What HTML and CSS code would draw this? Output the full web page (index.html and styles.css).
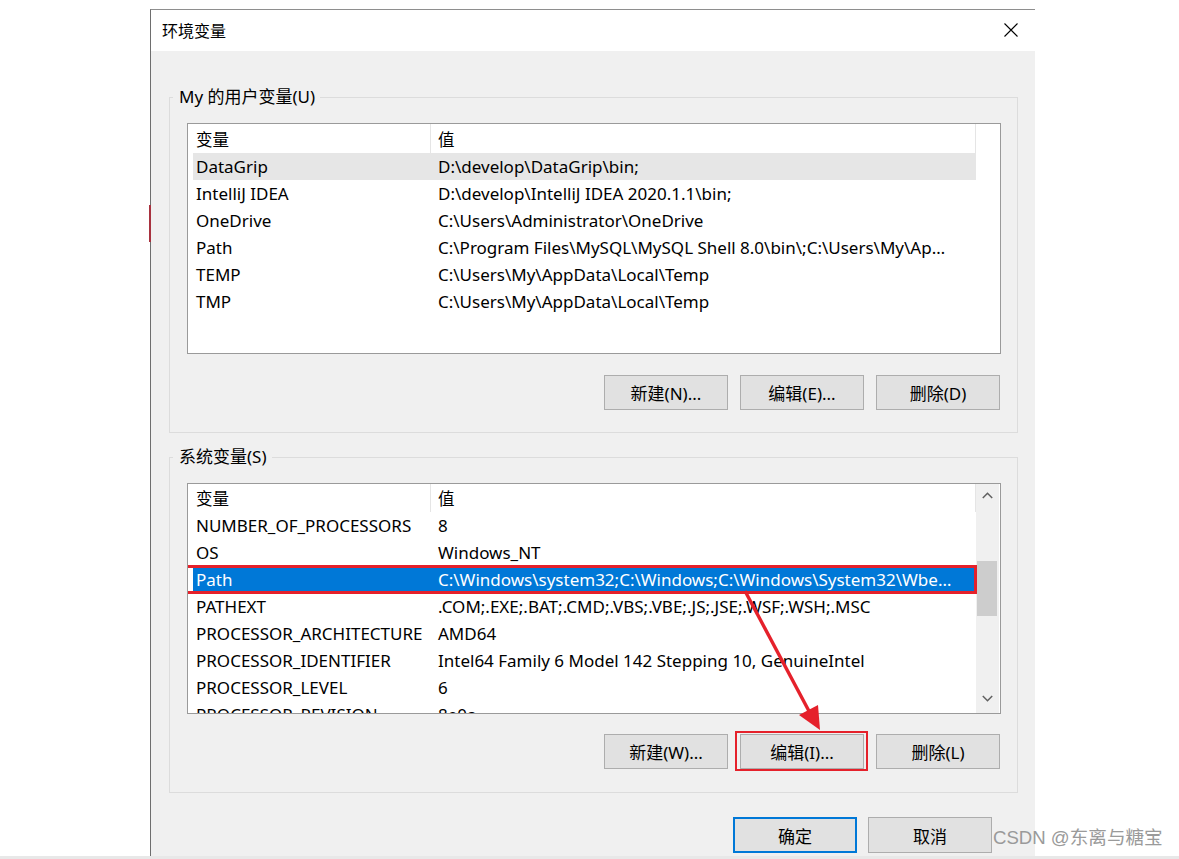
FILE: index.html
```html
<!DOCTYPE html>
<html lang="zh-CN">
<head>
<meta charset="utf-8">
<title>环境变量</title>
<link rel="stylesheet" href="styles.css">
</head>
<body>
<div class="page">
  <div class="dialog">
    <div class="titlebar">
      <span class="title">环境变量</span>
      <svg class="close" width="14" height="14" viewBox="0 0 14 14"><path d="M0.5 0.5 L13.5 13.5 M13.5 0.5 L0.5 13.5" stroke="#000" stroke-width="1.1" fill="none"/></svg>
    </div>
    <div class="dbody">
      <fieldset class="group">
        <legend>My 的用户变量(U)</legend>
        <div class="list list-user">
          <div class="list-main">
            <div class="lhead"><div class="hname">变量</div><div class="hval">值</div></div>
            <div class="row sel-gray"><div class="cname">DataGrip</div><div class="cval">D:\develop\DataGrip\bin;</div></div>
            <div class="row"><div class="cname">IntelliJ IDEA</div><div class="cval">D:\develop\IntelliJ IDEA 2020.1.1\bin;</div></div>
            <div class="row"><div class="cname">OneDrive</div><div class="cval">C:\Users\Administrator\OneDrive</div></div>
            <div class="row"><div class="cname">Path</div><div class="cval">C:\Program Files\MySQL\MySQL Shell 8.0\bin\;C:\Users\My\AppData\Local\Microsoft\WindowsApps;</div></div>
            <div class="row"><div class="cname">TEMP</div><div class="cval">C:\Users\My\AppData\Local\Temp</div></div>
            <div class="row"><div class="cname">TMP</div><div class="cval">C:\Users\My\AppData\Local\Temp</div></div>
          </div>
        </div>
        <div class="btnrow">
          <button class="btn">新建(N)...</button>
          <button class="btn">编辑(E)...</button>
          <button class="btn">删除(D)</button>
        </div>
      </fieldset>

      <fieldset class="group group-sys">
        <legend>系统变量(S)</legend>
        <div class="list">
          <div class="list-main">
            <div class="lhead"><div class="hname">变量</div><div class="hval">值</div></div>
            <div class="row"><div class="cname">NUMBER_OF_PROCESSORS</div><div class="cval">8</div></div>
            <div class="row"><div class="cname">OS</div><div class="cval">Windows_NT</div></div>
            <div class="row sel-blue"><div class="cname">Path</div><div class="cval">C:\Windows\system32;C:\Windows;C:\Windows\System32\Wbem;C:\Windows\System32\WindowsPowerShell\v1.0\;</div><div class="mark-row"></div></div>
            <div class="row"><div class="cname">PATHEXT</div><div class="cval">.COM;.EXE;.BAT;.CMD;.VBS;.VBE;.JS;.JSE;.WSF;.WSH;.MSC</div></div>
            <div class="row"><div class="cname">PROCESSOR_ARCHITECTURE</div><div class="cval">AMD64</div></div>
            <div class="row"><div class="cname">PROCESSOR_IDENTIFIER</div><div class="cval">Intel64 Family 6 Model 142 Stepping 10, GenuineIntel</div></div>
            <div class="row"><div class="cname">PROCESSOR_LEVEL</div><div class="cval">6</div></div>
            <div class="row"><div class="cname">PROCESSOR_REVISION</div><div class="cval">8e0a</div></div>
          </div>
          <div class="scrollbar">
            <div class="sbtn"><svg width="11" height="7" viewBox="0 0 11 7"><path d="M0.8 6 L5.5 1.2 L10.2 6" stroke="#606060" stroke-width="1.5" fill="none"/></svg></div>
            <div class="track"><div class="thumb"></div></div>
            <div class="sbtn sbtn-down"><svg width="11" height="7" viewBox="0 0 11 7"><path d="M0.8 1 L5.5 5.8 L10.2 1" stroke="#606060" stroke-width="1.5" fill="none"/></svg></div>
          </div>
        </div>
        <div class="btnrow">
          <button class="btn">新建(W)...</button>
          <button class="btn btn-marked">编辑(I)...<span class="mark-btn"></span></button>
          <button class="btn">删除(L)</button>
        </div>
      </fieldset>

      <div class="actions">
        <button class="btn btn-default">确定</button>
        <button class="btn">取消</button>
      </div>
    </div>
  </div>
</div>
<div class="strip"></div>

<div class="edge-mark"></div>
<svg class="arrow" width="1179" height="859" viewBox="0 0 1179 859">
  <line x1="745" y1="591" x2="810" y2="713" stroke="#e5212b" stroke-width="3.4"/>
  <polygon points="820,730 799,715 818,705" fill="#e5212b"/>
</svg>
<div class="watermark">CSDN @东离与糖宝</div>
</body>
</html>
```

FILE: styles.css
```css
* { box-sizing: border-box; }

body {
  margin: 0;
  width: 1179px;
  height: 859px;
  overflow: hidden;
  position: relative;
  background: #ffffff;
  font-family: "Noto Sans", "Noto Sans CJK SC", sans-serif;
  color: #000;
}

.page {
  padding: 9px 0 0 150px;
}

.dialog {
  width: 885px;
  border-top: 1px solid #8e8e8e;
  border-left: 1px solid #6e6e6e;
}

.titlebar {
  height: 41px;
  background: #ffffff;
  display: flex;
  align-items: center;
  justify-content: space-between;
  padding: 0 17px 0 11px;
}

.title {
  font-family: "Noto Sans CJK SC", sans-serif;
  font-size: 16px;
  line-height: 20px;
  margin-top: -2px;
}

.close { display: block; margin-top: -1px; }

.dbody {
  height: 805px;
  background: #f0f0f0;
  padding: 35px 17px 0 18px;
}

.group {
  margin: 0;
  min-width: 0;
  border: 1px solid #dcdcdc;
  padding: 0 16px 22px 17px;
}

.group-sys {
  margin-top: 13px;
  padding-bottom: 23px;
}

.group legend {
  margin-left: -14px;
  padding: 0 5px 0 6px;
  font-size: 17px;
  line-height: 22px;
}

.list {
  margin-top: 15px;
  height: 231px;
  border: 1px solid #9a9a9a;
  background: #ffffff;
  display: flex;
  overflow: hidden;
}

.list-main {
  width: 788px;
  flex: none;
}

.lhead {
  height: 28px;
  display: flex;
  font-size: 17px;
}

.list-user .lhead { height: 29px; }

.hname, .hval {
  display: flex;
  align-items: center;
  border-right: 1px solid #e5e5e5;
  font-family: "Noto Sans CJK SC", sans-serif;
  font-size: 16.5px;
}

.hname { width: 243px; padding-left: 8px; }
.hval { width: 545px; padding-left: 7px; }

.row {
  position: relative;
  margin-left: 5px;
  width: 783px;
  height: 27px;
  display: flex;
  align-items: center;
  font-size: 17px;
  white-space: nowrap;
}

.cname {
  width: 237px;
  padding-left: 3px;
  overflow: hidden;
}

.cval {
  width: 546px;
  padding-left: 8px;
  padding-right: 26px;
  overflow: hidden;
  text-overflow: ellipsis;
}

.sel-gray { background: #e6e6e6; }

.sel-blue {
  background: #0078d7;
  color: #ffffff;
}

.sel-blue .cval { padding-right: 10px; }

.mark-row {
  position: absolute;
  left: -10px;
  right: -1px;
  top: -1px;
  bottom: -1px;
  border: 3px solid #e5212b;
}

.scrollbar {
  width: 23px;
  margin-left: 0;
  background: #f0f0f0;
  display: flex;
  flex-direction: column;
}

.sbtn {
  height: 23px;
  display: flex;
  align-items: center;
  justify-content: center;
}

.sbtn-down { margin-bottom: 3px; }

.track { flex: 1; padding: 0 2px 0 1px; }

.thumb {
  margin-top: 54px;
  height: 55px;
  background: #cdcdcd;
}

.btnrow {
  display: flex;
  justify-content: flex-end;
  gap: 12px;
  margin-top: 21px;
  padding-right: 1px;
}

.group-sys .btnrow { margin-top: 20px; }

.btn {
  position: relative;
  width: 124px;
  height: 35px;
  margin: 0;
  padding: 0;
  background: #e1e1e1;
  border: 1px solid #adadad;
  font-family: "Noto Sans", "Noto Sans CJK SC", sans-serif;
  font-size: 17px;
  color: #000;
}

.mark-btn {
  position: absolute;
  left: -6px;
  right: -5px;
  top: -4px;
  bottom: -3px;
  border: 2.5px solid #e5212b;
}

.actions {
  display: flex;
  justify-content: flex-end;
  gap: 11px;
  margin-top: 24px;
  padding-right: 26px;
}

.actions .btn { height: 36px; }

.btn-default {
  border: 2px solid #0078d7;
}

.strip {
  height: 3px;
  background: #e8e8e8;
}

.edge-mark {
  position: absolute;
  left: 149px;
  top: 205px;
  width: 2px;
  height: 37px;
  background: #a8323f;
}

.arrow {
  position: absolute;
  left: 0;
  top: 0;
  pointer-events: none;
}

.watermark {
  position: absolute;
  left: 993px;
  top: 826px;
  font-family: "Liberation Sans", "Noto Sans CJK SC", sans-serif;
  font-size: 18.6px;
  line-height: 24px;
  color: #9a9a9a;
  white-space: nowrap;
}
```
